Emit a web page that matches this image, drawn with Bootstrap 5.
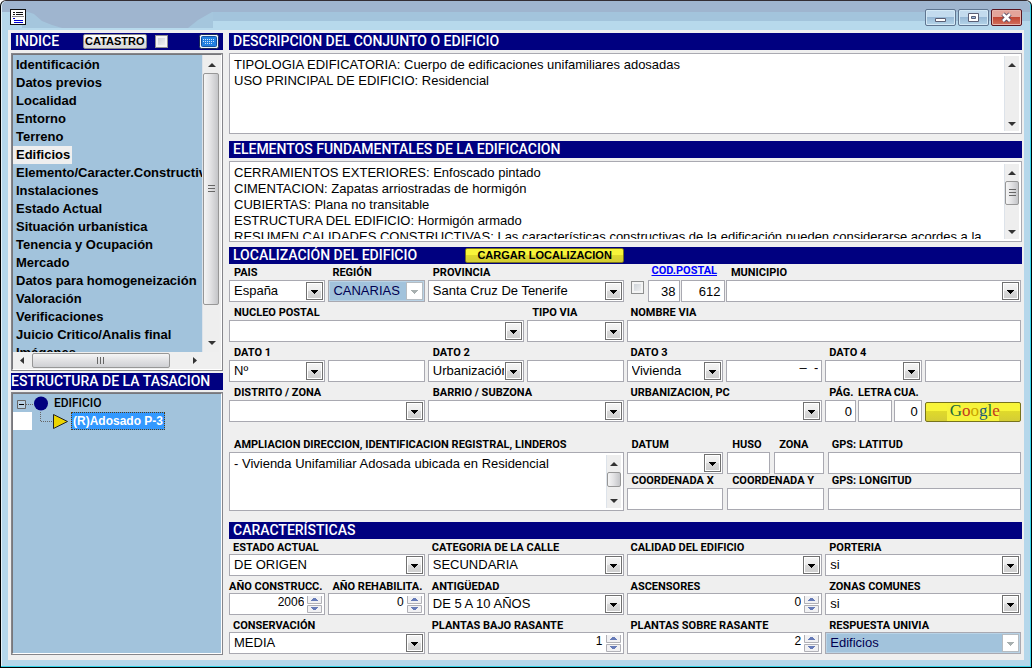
<!DOCTYPE html>
<html lang="es">
<head>
<meta charset="utf-8">
<meta name="viewport" content="width=device-width, initial-scale=1">
<title>Tasación - Edificios</title>
<link href="https://cdn.jsdelivr.net/npm/bootstrap@5.3.0/dist/css/bootstrap.min.css" rel="stylesheet">
<style>
:root{--navy:#000080;--pane:#a2c3dc;--frame:#b5d7eb;--face:#efefef;--line:#a9a9b1}
body{font:13px/16px "Liberation Sans",Arial,sans-serif;color:#000;background:#fff}
.app-window{min-height:100vh;background:var(--frame);border:1px solid #000;border-top-color:#332d33;border-radius:6px 6px 0 0;box-shadow:inset -1px -1px 0 #35d3e8,inset 1px 1px 0 #e4f1f8;padding:0 7px 7px}
.title-strip{height:29px;margin:0 -6px;padding:3px 8px 0;background:linear-gradient(#9fb5cf 11px,#a3c4dc 11px 20px,#b7d9ec 20px);border-radius:5px 5px 0 0}
.title-shape{left:0;top:0;z-index:0}
.win-btn{width:31px;height:17px;border:1px solid #5f7590;border-radius:2px;padding:0;background:linear-gradient(#c3dbee 50%,#98b9d6 50%,#b5d5e9);box-shadow:inset 0 0 0 1px #d4e9f6}
.win-close{border-color:#5b1520;background:linear-gradient(#e3a49a 45%,#bf4330 45%,#d3705d);box-shadow:inset 0 0 0 1px #e7b4ab}
.work{background:var(--face);padding:3px 2px 5px 3px;gap:6px}
.side{width:212px;flex:none}
.bar{background:var(--navy);color:#fff;font:500 14px/17px Roboto,sans-serif;height:17px;padding-left:4px;white-space:nowrap}
.bar h2{font:inherit;margin:0}
.gap-after-bar{margin-bottom:3px}
.gap-after-list{margin-bottom:2px}
.gap-after-memo{margin-bottom:7px}
.gap-before-loc{margin-bottom:5px}
.gap-group{margin-top:14px}
.gap-bar{margin-top:11px}
.sunken{border:2px solid #77777b;border-right-color:#fff;border-bottom-color:#fff;outline:1px solid #85858a;outline-offset:-1px;background:var(--face)}
.index-pane{padding-right:2px}
.index-list{background:var(--pane);height:297px;overflow:hidden;flex:1;min-width:0;padding-top:1px}
.index-list button{display:block;border:0;background:none;padding:0 2px 0 3px;font:bold 13px/18px "Liberation Sans",Arial,sans-serif;height:18px;white-space:nowrap}
.index-list button.active{background:var(--face)}
.tree{background:var(--pane);flex:1;padding:0}
.tree-row{height:18px;line-height:18px}
.tree-pick{background:#3399ff;color:#fff;border:1px dotted #5a3c10;font-weight:bold;font-size:12px;line-height:16px;padding:0 1px}
.sb{width:15px;flex:none;background:#eee;border-left:1px solid #dde3ea}
.sb .thumb,.hthumb{border:1px solid #979797;border-radius:2px;background:linear-gradient(90deg,#f5f5f5,#e3e3e5 45%,#c4c5c8)}
.hthumb{background:linear-gradient(#f5f5f5,#e3e3e5 45%,#cfd0d3)}
.memo-box{background:#fff;border:1px solid var(--line);padding:2px}
.memo-box textarea{border:0;resize:none;outline:0;overflow:hidden;padding:1px 2px 0;flex:1;min-width:0;font:13px/16px "Liberation Sans",Arial,sans-serif;color:#000;display:block;height:75px}
.memo-box.short textarea{height:53px}
.fields{display:grid;grid-template-columns:repeat(8,minmax(0,1fr));column-gap:3px;row-gap:2px;padding-right:1px}
.s2{grid-column:span 2}.s3{grid-column:span 3}.s4{grid-column:span 4}
.fields label{display:block;font:bold 11px/16px Roboto,sans-serif;height:16px;padding-top:1px;padding-left:5px;white-space:nowrap;color:#000}
.fields .tight label,.fields.tight label{padding-left:4px}
.fields.tight label{height:15px}
.fields .coord{height:14px;line-height:14px;padding-top:0}
.fld{display:block;width:100%;height:22px;border:1px solid var(--line);border-radius:0;background:#fff;padding:0 4px;font:13px/20px "Liberation Sans",Arial,sans-serif;color:#000;appearance:none;outline:0}
select.fld{padding-right:19px;background:#fff url("data:image/svg+xml,%3Csvg xmlns='http://www.w3.org/2000/svg' width='17' height='18'%3E%3Cdefs%3E%3ClinearGradient id='g' x2='0' y2='1'%3E%3Cstop stop-color='%23f4f4f4'/%3E%3Cstop offset='.5' stop-color='%23ebebeb'/%3E%3Cstop offset='.5' stop-color='%23dadada'/%3E%3Cstop offset='1' stop-color='%23cfcfcf'/%3E%3C/linearGradient%3E%3C/defs%3E%3Crect x='.5' y='.5' width='16' height='17' fill='%23fff' stroke='%23707070'/%3E%3Crect x='2' y='2' width='13' height='14' fill='url(%23g)'/%3E%3Cpath d='M5 8h7v1h-1v1h-1v1H9v1H8v-1H7v-1H6V9H5z'/%3E%3C/svg%3E") no-repeat right 1px center}
select.fld:disabled{opacity:1;color:#000050;box-shadow:inset 0 0 0 1px #b9d3e6;background-color:var(--pane);background-image:url("data:image/svg+xml,%3Csvg xmlns='http://www.w3.org/2000/svg' width='17' height='18'%3E%3Crect x='.5' y='.5' width='16' height='17' fill='%23fff' stroke='%23b5bcc2'/%3E%3Cpath d='M5 8h7v1h-1v1h-1v1H9v1H8v-1H7v-1H6V9H5z' fill='%23a8b0b0'/%3E%3C/svg%3E")}
input[type=number].fld{appearance:textfield;font-size:12px;line-height:16px;text-align:right;padding:0 20px 4px 4px;background:#fff url("data:image/svg+xml,%3Csvg xmlns='http://www.w3.org/2000/svg' width='15' height='17'%3E%3Cpath d='M.5 0v7.5h14V0M.5 9.5h14v7H.5z' fill='%23f1f1f3' stroke='%23b0b0b6'/%3E%3Cpath d='M4 5h7v-1h-1V3H9V2H6v1H5v1H4zM4 11h7v1h-1v1H9v1H6v-1H5v-1H4z' fill='%23667bb8'/%3E%3C/svg%3E") no-repeat right 2px top 2px}
input[type=number].fld::-webkit-inner-spin-button{appearance:none;margin:0}
.num{text-align:right;padding-right:3px}
.tick{appearance:none;flex:none;width:13px;height:13px;margin:0;border:1px solid #8e8f8f;background:linear-gradient(135deg,#c6ccd2,#f6f6f6);box-shadow:inset 0 0 0 2px #f4f4f4}
.mini-btn{font:bold 11px/13px "Liberation Sans",Arial,sans-serif;height:15px;border:1px solid #8a8a8a;border-radius:2px;background:linear-gradient(#fff,#eee 50%,#ddd 50%,#ddd);padding:0 1px;color:#000}
.gold{background:linear-gradient(#f8f53a 45%,#e0da2b 45%,#d4cd35);border-color:#77731c}
.search-btn{height:20px}
.search-name{font:17px/16px "Liberation Serif",serif;background:#f6f33c;padding:0 3px;display:block;width:52px;margin:0 auto;height:18px}
.cp-link{font:bold 11px/14px Roboto,sans-serif;color:#00f;text-decoration:underline;height:16px;white-space:nowrap}
</style>
</head>
<body>
<div class="app-window d-flex flex-column">
  <header class="title-strip position-relative d-flex align-items-center">
    <svg class="title-shape position-absolute" width="212" height="29" aria-hidden="true"><path d="M0 11H211V27H0z" fill="#a5c6dd"/><path d="M0 11H20V29H0z" fill="#b5d7eb"/><path d="M26 11L32 13L40 20L50 24L60 27H186L196 19L210 11z" fill="#9fb5cf"/></svg>
    <svg class="position-relative" width="16" height="16" viewBox="0 0 16 16" shape-rendering="crispEdges" aria-hidden="true"><path d="M0 0h16v16H0z" fill="#111"/><path d="M1 1h14v14H1z" fill="#fff"/><path d="M2 7h12v1H2z" fill="#888"/><path d="M3 3h2v1H3zM6 3h7v1H6zM3 5h2v1H3zM6 5h7v1H6z" fill="#111"/><path d="M3 9h2v1H3zM4 11h9v1H4zM4 13h9v1H4z" fill="#0000d0"/></svg>
    <div class="ms-auto d-flex position-relative" style="gap:2px">
      <button type="button" class="win-btn d-flex align-items-center justify-content-center" aria-label="Minimizar"><svg width="13" height="13"><path d="M1.500 7.500h10v3h-10z" fill="#fff" stroke="#5a5f75"/></svg></button>
      <button type="button" class="win-btn d-flex align-items-center justify-content-center" aria-label="Maximizar"><svg width="13" height="13"><path d="M1.500 2.500h10v8h-10z" fill="#fff" stroke="#5a5f75"/><path d="M4.500 5.500h4v2h-4z" fill="#9bbbe0" stroke="#5a5f75"/></svg></button>
      <button type="button" class="win-btn win-close d-flex align-items-center justify-content-center" aria-label="Cerrar"><svg width="13" height="13"><path d="M3 3L10 10M10 3L3 10" stroke="#5a4a60" stroke-width="4.500"/><path d="M3 3L10 10M10 3L3 10" stroke="#fff" stroke-width="2.500"/></svg></button>
    </div>
  </header>

  <main class="work d-flex flex-fill">
    <aside class="side d-flex flex-column">
      <div class="bar d-flex align-items-center gap-after-bar">
        <h2>INDICE</h2>
        <button type="button" class="mini-btn ms-4">CATASTRO</button>
        <input type="checkbox" class="tick ms-2" aria-label="Catastro">
        <button type="button" class="border-0 p-0 bg-transparent ms-auto me-1 d-flex" aria-label="Teclado"><svg width="20" height="15"><rect x=".5" y=".5" width="19" height="14" rx="2" fill="#f4f6f8" stroke="#1b2a55"/><rect x="2.500" y="2.500" width="15" height="10" rx="1" fill="#2380e0" stroke="#1454a4"/><path d="M4 5.500h12M4 7.500h12M6 9.500h8" stroke="#cfe4fb" stroke-dasharray="1 1"/></svg></button>
      </div>
      <div class="sunken index-pane gap-after-list">
        <div class="d-flex">
          <nav class="index-list" aria-label="Indice">
            <button type="button">Identificación</button><button type="button">Datos previos</button><button type="button">Localidad</button><button type="button">Entorno</button><button type="button">Terreno</button><button type="button" class="active">Edificios</button><button type="button">Elemento/Caracter.Constructivas</button><button type="button">Instalaciones</button><button type="button">Estado Actual</button><button type="button">Situación urbanística</button><button type="button">Tenencia y Ocupación</button><button type="button">Mercado</button><button type="button">Datos para homogeneización</button><button type="button">Valoración</button><button type="button">Verificaciones</button><button type="button">Juicio Critico/Analis final</button><button type="button">Imágenes</button>
          </nav>
          <div class="sb d-flex flex-column align-items-center" style="width:17px">
            <svg width="15" height="18"><path d="M4 12l4-4 4 4z" fill="#333"/></svg>
            <div class="thumb w-100 d-flex align-items-center justify-content-center" style="height:232px"><svg width="7" height="8"><path d="M0 .5h7M0 3.500h7M0 6.500h7" stroke="#666"/></svg></div>
            <svg class="mt-auto" width="15" height="18"><path d="M4 7h8l-4 4z" fill="#333"/></svg>
          </div>
        </div>
        <div class="d-flex align-items-center pe-3" style="height:17px">
          <svg width="19" height="15"><path d="M11 4v7L7 7.500z" fill="#333"/></svg>
          <div class="hthumb d-flex align-items-center justify-content-center" style="width:138px;height:15px"><svg width="8" height="7"><path d="M.5 0v7M3.500 0v7M6.500 0v7" stroke="#666"/></svg></div>
          <svg class="ms-auto" width="18" height="15"><path d="M8 4v7l4-3.500z" fill="#333"/></svg>
        </div>
      </div>
      <div class="bar ps-0 gap-after-list"><h2>ESTRUCTURA DE LA TASACION</h2></div>
      <div class="tree sunken">
        <div class="tree-row d-flex align-items-center"><svg width="38" height="18"><path d="M4.500 6.500h8v8h-8z" fill="#b9d1e3" stroke="#666"/><path d="M6 10.500h5" stroke="#000"/><path d="M13 10.500h8" stroke="#666" stroke-dasharray="1 1"/><circle cx="28" cy="9.500" r="7" fill="#000080"/></svg><span style="font:500 12px/18px Roboto,sans-serif;padding-left:3px">EDIFICIO</span></div>
        <div class="tree-row d-flex align-items-center"><svg width="58" height="18"><path d="M0 0h19v18H0z" fill="#fff"/><path d="M27.500 0v9.500H39" fill="none" stroke="#666" stroke-dasharray="1 1"/><path d="M40.500 2.500l14 7-14 7z" fill="#ecd400" stroke="#222"/></svg><span class="tree-pick">(R)Adosado P-3</span></div>
      </div>
    </aside>

    <form class="flex-fill" style="min-width:0">
      <div class="bar gap-after-bar"><h2>DESCRIPCION DEL CONJUNTO O EDIFICIO</h2></div>
      <div class="memo-box d-flex gap-after-memo">
        <textarea aria-label="Descripción del conjunto">TIPOLOGIA EDIFICATORIA: Cuerpo de edificaciones unifamiliares adosadas
USO PRINCIPAL DE EDIFICIO: Residencial</textarea>
        <div class="sb d-flex flex-column"><svg width="14" height="18"><path d="M3 11l4-4 4 4z" fill="#333"/></svg><svg class="mt-auto" width="14" height="18"><path d="M3 9h8l-4 4z" fill="#333"/></svg></div>
      </div>
      <div class="bar gap-after-bar"><h2>ELEMENTOS FUNDAMENTALES DE LA EDIFICACION</h2></div>
      <div class="memo-box d-flex gap-before-loc">
        <textarea aria-label="Elementos fundamentales" wrap="off">CERRAMIENTOS EXTERIORES: Enfoscado pintado
CIMENTACION: Zapatas arriostradas de hormigón
CUBIERTAS: Plana no transitable
ESTRUCTURA DEL EDIFICIO: Hormigón armado
RESUMEN CALIDADES CONSTRUCTIVAS: Las características constructivas de la edificación pueden considerarse acordes a la</textarea>
        <div class="sb d-flex flex-column"><svg width="14" height="17"><path d="M3 11l4-4 4 4z" fill="#333"/></svg><div class="thumb d-flex align-items-center justify-content-center" style="height:24px"><svg width="7" height="8"><path d="M0 .5h7M0 3.500h7M0 6.500h7" stroke="#666"/></svg></div><svg class="mt-auto" width="14" height="18"><path d="M3 9h8l-4 4z" fill="#333"/></svg></div>
      </div>
      <div class="bar d-flex align-items-center"><h2>LOCALIZACIÓN DEL EDIFICIO</h2><button type="button" class="mini-btn gold ms-5" style="width:159px">CARGAR LOCALIZACION</button></div>

      <div class="fields">
        <div><label for="pais">PAIS</label><select class="fld" id="pais"><option>España</option></select></div>
        <div class="tight"><label for="region">REGIÓN</label><select class="fld" id="region" disabled><option>CANARIAS</option></select></div>
        <div class="s2"><label for="prov">PROVINCIA</label><select class="fld" id="prov"><option>Santa Cruz De Tenerife</option></select></div>
        <div class="d-flex align-items-end">
          <input type="checkbox" class="tick align-self-end mb-2 ms-1 me-1" aria-label="Código postal manual">
          <div class="flex-fill">
            <a href="#cp" class="cp-link d-block ps-1">COD.POSTAL</a>
            <div class="d-flex" style="gap:1px"><input class="fld num" style="width:32px" id="cp" value="38" aria-label="Código provincia"><input class="fld num flex-fill" style="width:44px" value="612" aria-label="Código municipio"></div>
          </div>
        </div>
        <div class="s3"><label for="muni">MUNICIPIO</label><select class="fld" id="muni"><option></option></select></div>

        <div class="s3"><label for="nucleo">NUCLEO POSTAL</label><select class="fld" id="nucleo"><option></option></select></div>
        <div><label for="tipovia">TIPO VIA</label><select class="fld" id="tipovia"><option></option></select></div>
        <div class="s4 tight"><label for="via">NOMBRE VIA</label><input class="fld" id="via"></div>

        <div><label for="d1">DATO 1</label><select class="fld" id="d1"><option>Nº</option></select></div>
        <div class="align-self-end"><input class="fld" aria-label="Valor dato 1"></div>
        <div><label for="d2">DATO 2</label><select class="fld" id="d2"><option>Urbanización</option></select></div>
        <div class="align-self-end"><input class="fld" aria-label="Valor dato 2"></div>
        <div class="tight"><label for="d3">DATO 3</label><select class="fld" id="d3"><option>Vivienda</option></select></div>
        <div class="align-self-end"><input class="fld num pb-2" value="–  -" aria-label="Valor dato 3"></div>
        <div class="tight"><label for="d4">DATO 4</label><select class="fld" id="d4"><option></option></select></div>
        <div class="align-self-end"><input class="fld" aria-label="Valor dato 4"></div>

        <div class="s2"><label for="dist">DISTRITO / ZONA</label><select class="fld" id="dist"><option></option></select></div>
        <div class="s2"><label for="barrio">BARRIO / SUBZONA</label><select class="fld" id="barrio"><option></option></select></div>
        <div class="s2 tight"><label for="urb">URBANIZACION, PC</label><select class="fld" id="urb"><option></option></select></div>
        <div class="d-flex tight" style="gap:2px">
          <div style="width:31px"><label for="pag">PÁG.</label><input class="fld num" id="pag" value="0"></div>
          <div style="width:34px"><label for="letra" class="ps-0">LETRA</label><input class="fld" id="letra"></div>
          <div class="flex-fill" style="width:28px"><label for="cua" class="ps-0">CUA.</label><input class="fld num" id="cua" value="0"></div>
        </div>
        <div class="align-self-end"><button type="button" class="mini-btn gold search-btn w-100" aria-label="Google"><span class="search-name"><span style="color:#1c6b3a">G</span><span style="color:#c23a1c">o</span><span style="color:#c9a400">o</span><span style="color:#1c5a7a">g</span><span style="color:#2c7a2c">l</span><span style="color:#c23a1c">e</span></span></button></div>
      </div>

      <div class="fields gap-group">
        <div class="s4"><label for="ampl">AMPLIACION DIRECCION, IDENTIFICACION REGISTRAL, LINDEROS</label>
          <div class="memo-box short d-flex"><textarea id="ampl">- Vivienda Unifamiliar Adosada ubicada en Residencial</textarea>
          <div class="sb d-flex flex-column"><svg width="14" height="17"><path d="M3 11l4-4 4 4z" fill="#333"/></svg><div class="thumb" style="height:15px"></div><svg class="mt-auto" width="14" height="17"><path d="M3 8h8l-4 4z" fill="#333"/></svg></div></div>
        </div>
        <div class="s4">
          <div class="d-flex" style="gap:4px">
            <div style="flex:1 1 0"><label for="datum">DATUM</label><select class="fld" id="datum"><option></option></select><label for="cx" class="coord">COORDENADA X</label><input class="fld" id="cx"></div>
            <div style="flex:1 1 0">
              <div class="d-flex" style="gap:4px"><div style="width:43px"><label for="huso">HUSO</label><input class="fld" id="huso"></div><div class="flex-fill" style="width:48px"><label for="zona">ZONA</label><input class="fld" id="zona"></div></div>
              <label for="cy" class="coord">COORDENADA Y</label><input class="fld" id="cy">
            </div>
            <div class="tight" style="flex:2 1 0"><label for="lat">GPS: LATITUD</label><input class="fld" id="lat"><label for="lon" class="coord">GPS: LONGITUD</label><input class="fld" id="lon"></div>
          </div>
        </div>
      </div>

      <div class="bar gap-bar"><h2>CARACTERÍSTICAS</h2></div>
      <div class="fields tight">
        <div class="s2"><label for="estado">ESTADO ACTUAL</label><select class="fld" id="estado"><option>DE ORIGEN</option></select></div>
        <div class="s2"><label for="cat">CATEGORIA DE LA CALLE</label><select class="fld" id="cat"><option>SECUNDARIA</option></select></div>
        <div class="s2"><label for="cal">CALIDAD DEL EDIFICIO</label><select class="fld" id="cal"><option></option></select></div>
        <div class="s2"><label for="port">PORTERIA</label><select class="fld" id="port"><option>si</option></select></div>

        <div><label for="ac" class="ps-0">AÑO CONSTRUCC.</label><input type="number" class="fld" id="ac" value="2006"></div>
        <div><label for="ar">AÑO REHABILITA.</label><input type="number" class="fld" id="ar" value="0"></div>
        <div class="s2"><label for="ant">ANTIGÜEDAD</label><select class="fld" id="ant"><option>DE 5 A 10 AÑOS</option></select></div>
        <div class="s2"><label for="asc">ASCENSORES</label><input type="number" class="fld" id="asc" value="0"></div>
        <div class="s2"><label for="zc">ZONAS COMUNES</label><select class="fld" id="zc"><option>si</option></select></div>

        <div class="s2"><label for="cons">CONSERVACIÓN</label><select class="fld" id="cons"><option>MEDIA</option></select></div>
        <div class="s2"><label for="pb">PLANTAS BAJO RASANTE</label><input type="number" class="fld" id="pb" value="1"></div>
        <div class="s2"><label for="ps">PLANTAS SOBRE RASANTE</label><input type="number" class="fld" id="ps" value="2"></div>
        <div class="s2"><label for="ru">RESPUESTA UNIVIA</label><select class="fld" id="ru" disabled><option>Edificios</option></select></div>
      </div>
    </form>
  </main>
</div>
<script src="https://cdn.jsdelivr.net/npm/bootstrap@5.3.0/dist/js/bootstrap.bundle.min.js"></script>
</body>
</html>
